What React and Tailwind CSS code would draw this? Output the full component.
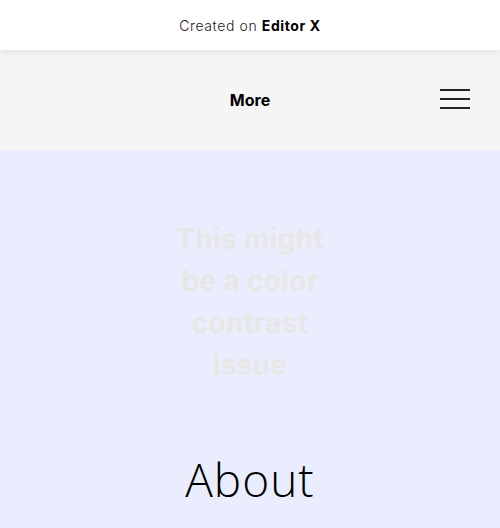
import React from 'react';

const App = () => {
  return (
    <div className="w-[500px] h-[528px] overflow-hidden bg-[#eaedfe] font-['Inter',sans-serif]">
      <div className="relative z-10 h-[50px] bg-white flex items-center justify-center shadow-[0_2px_6px_rgba(0,0,0,0.08)]">
        <span className="text-[14px] tracking-[0.6px] text-[#222] font-light">
          Created on <span className="font-bold text-black">Editor X</span>
        </span>
      </div>

      <div className="relative h-[100px] bg-[#f5f5f5] flex items-center justify-center">
        <span className="text-[16px] font-bold text-black">More</span>
        <button className="absolute right-[30px] top-[39px] flex flex-col gap-[7px] w-[30px]">
          <span className="block h-[2px] w-full bg-[#222]" />
          <span className="block h-[2px] w-full bg-[#222]" />
          <span className="block h-[2px] w-full bg-[#222]" />
        </button>
      </div>

      <div className="flex flex-col items-center pt-[68px]">
        <p className="w-[180px] text-center text-[28px] leading-[42px] font-bold text-[#e7e7e5] tracking-[0.3px]">
          This might be a color contrast issue
        </p>
        <h2 className="mt-[70px] text-[46px] leading-none font-light text-black tracking-[1px] font-['Open_Sans',sans-serif]">
          About
        </h2>
      </div>
    </div>
  );
};

export default App;
